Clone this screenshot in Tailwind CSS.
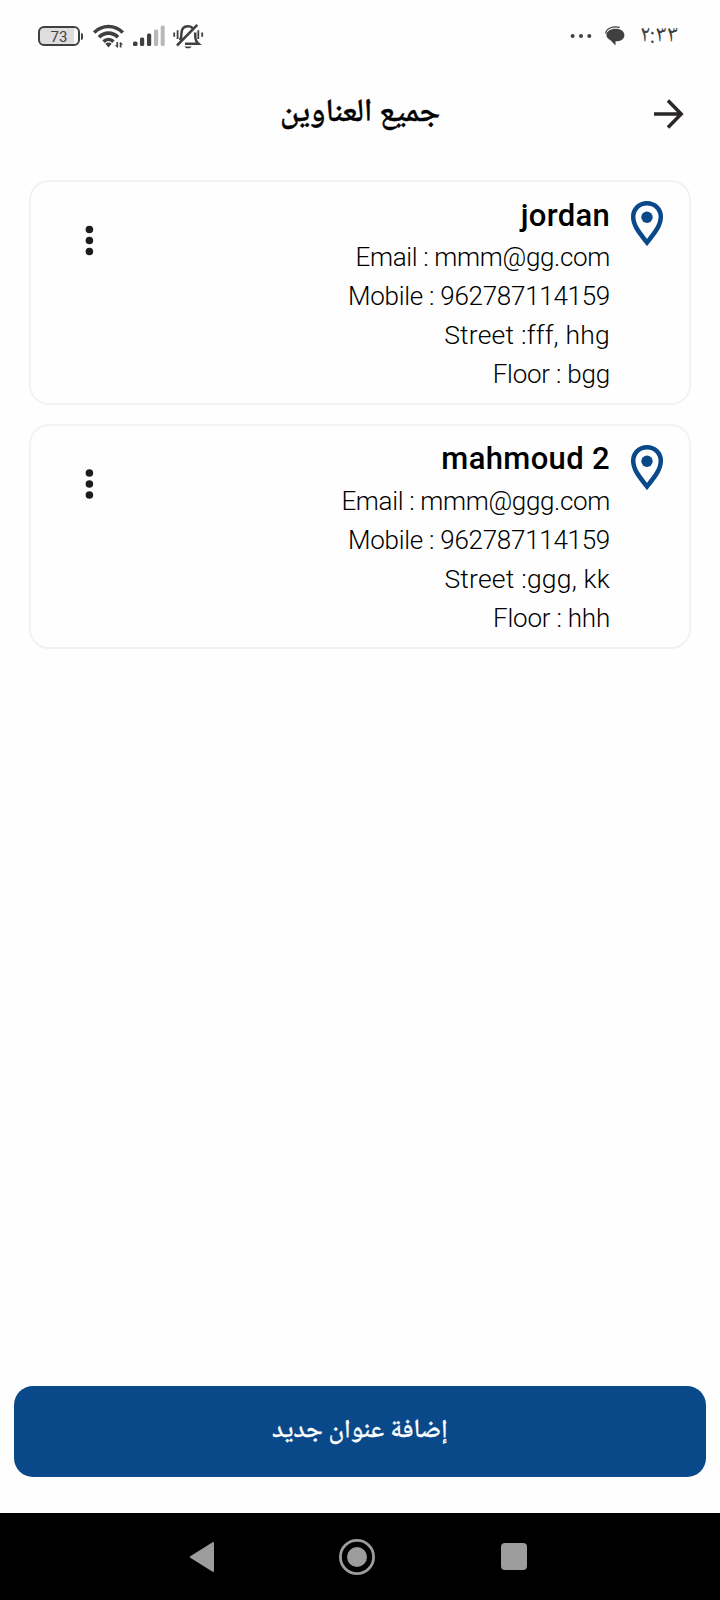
<!DOCTYPE html>
<html lang="ar">
<head>
<meta charset="utf-8">
<meta name="viewport" content="width=device-width, initial-scale=1">
<title>جميع العناوين</title>
<script src="https://cdn.jsdelivr.net/npm/@tailwindcss/browser@4"></script>
</head>
<body class="bg-white">
<div class="flex h-[1600px] w-[720px] flex-col overflow-hidden bg-[#fefefe] font-['Roboto','DejaVu_Sans',sans-serif] text-black">

  <!-- Status bar -->
  <div class="flex h-[72px] shrink-0 items-center justify-between pr-[42px] pl-[38px] text-[#404040]">
    <div class="flex items-center">
      <div class="flex items-center">
        <div class="flex h-[20px] w-[42px] items-center justify-center rounded-[6px] border-2 border-current bg-linear-to-r from-[#dedede] from-90% to-white to-90% pt-[2px] text-[15px] leading-none">73</div>
        <div class="ml-[1px] h-[7px] w-[2px] rounded-r bg-current"></div>
      </div>
      <svg class="ml-[10px] h-[24px] w-[31px]" viewBox="0 0 31 24" fill="none" stroke="currentColor" stroke-width="3.600">
        <path d="M1.200 8.600C9 .5 22 .5 29.800 8.600M6 13.200c5.400-5.400 13.600-5.400 19 0M10.500 17.600c3-2.900 7-2.900 10 0"/>
        <path d="M12.400 19.800c1.800-1.600 4.400-1.600 6.200 0L15.500 23.400z" fill="currentColor" stroke="none"/>
        <path d="M24.300 18v4.600M27.600 23.600V19" stroke-width="1.700"/><path d="M21.800 21.300h3.200v2.800zM30.200 20.600h-3.300v-2.800z" fill="currentColor" stroke="none"/>
      </svg>
      <svg class="ml-[9px] h-[22px] w-[32px]" viewBox="0 0 32 22">
        <g fill="currentColor"><rect x="0" y="16.5" width="4.5" height="4.5" rx="1.5"/><rect x="7" y="12.5" width="4.2" height="8.5" rx="1.5"/><rect x="14" y="8.5" width="4.2" height="12.5" rx="1.5"/></g>
        <g fill="#b8b8b8"><rect x="21" y="4.5" width="4.2" height="16.5" rx="1.5"/><rect x="27.7" y=".5" width="4" height="20.5" rx="1.5"/></g>
      </svg>
      <svg class="ml-[8px] h-[26px] w-[31px]" viewBox="0 0 31 26" fill="none" stroke="currentColor" stroke-width="2.5">
        <path d="M7 17.200c1.200-1.800 1.400-3.400 1.400-6.200 0-5 2.600-7.700 6.600-7.700 2 0 3.400.6 4.500 1.700M12 20.700h13.500c-2.600-2.300-3.300-4.300-3.300-8.300V9.500M4 22.500 24.300 1.800"/>
        <path d="M1.200 9.400v4.400M4.600 7.300v8.600M25.300 7.300v8.600M29.200 9.400v4.400" stroke-width="1.800"/>
        <path d="M11.500 23.400h7.200c-1.400 2.600-5.800 2.600-7.200 0z" fill="currentColor" stroke="none"/>
      </svg>
    </div>
    <div class="flex items-center">
      <svg class="h-[6px] w-[22px]" viewBox="0 0 22 6" fill="currentColor"><circle cx="2.6" cy="3" r="2"/><circle cx="11" cy="3" r="2"/><circle cx="19.3" cy="3" r="2"/></svg>
      <svg class="ml-[13px] h-[20px] w-[20px]" viewBox="0 0 20 20" fill="currentColor">
        <path d="M10.700 2.700c5 0 8.700 2.600 8.700 6.500 0 3.900-3.500 6-8.900 6.100v4.300l-5-5.300C3.200 13 1.400 11.500 1.400 9.100 1.400 5.200 5.400 2.700 10.700 2.700z"/>
        <path d="M.7 7.600C1.200 2.500 7 0 14.800 1.300" fill="none" stroke="currentColor" stroke-width="1.200"/>
      </svg>
      <span class="ml-[15px] font-['Noto_Naskh_Arabic_UI','Noto_Naskh_Arabic','DejaVu_Sans'] text-[24.3px] leading-none" dir="ltr">٢:٣٣</span>
    </div>
  </div>

  <!-- Page header -->
  <header class="grid h-[84px] shrink-0 grid-cols-[60px_1fr_60px] items-center">
    <span></span>
    <h1 class="pb-[2px] text-center font-['Noto_Naskh_Arabic_UI','Noto_Naskh_Arabic','DejaVu_Sans'] text-[32.2px] leading-none font-medium [-webkit-text-stroke:0.5px_currentColor]" dir="rtl">جميع العناوين</h1>
    <svg class="-ml-[8px] h-[32px] w-[32px]" viewBox="0 0 32 32" fill="none" stroke="#2b2729" stroke-width="3.500"><path d="M2 16h26M16 2.500 29.200 16 16 29.500"/></svg>
  </header>

  <!-- Saved addresses -->
  <main class="flex flex-1 flex-col gap-[19px] px-[29px] pt-[24px]">
    <section class="flex h-[225px] justify-between rounded-[20px] border-2 border-[#f2f2f2] pr-[25px] pl-[53px]">
      <svg class="mt-[42px] h-[32px] w-[10px]" viewBox="0 0 10 32" fill="#1c1b1d"><circle cx="5.4" cy="5.500" r="3.8"/><circle cx="5.4" cy="16.500" r="3.8"/><circle cx="5.4" cy="27.500" r="3.8"/></svg>
      <div class="flex gap-[20px]">
        <div class="pt-[14px] text-right text-[26px] leading-[39px] font-light tracking-[-0.34px]">
          <h2 class="mb-[3px] text-[31px] leading-[39px] font-medium tracking-[0.3px]">jordan</h2>
          <p>Email : mmm@gg.com</p>
          <p class="tracking-[-0.28px]">Mobile : 962787114159</p>
          <p class="-mt-px mb-px text-[26.5px] tracking-[0.2px]">Street :fff, hhg</p>
          <p class="tracking-[-0.22px]">Floor : bgg</p>
        </div>
        <svg class="mt-[18px] h-[46px] w-[34px]" viewBox="0 0 34 46"><path d="M17 3.200C9.200 3.200 3.200 9.200 3.200 17c0 8.500 6.300 16 13.800 25.500C24.500 33 30.800 25.500 30.800 17 30.800 9.200 24.800 3.200 17 3.200z" fill="none" stroke="#09498a" stroke-width="4.500"/><circle cx="17" cy="17.300" r="5.700" fill="#09498a"/></svg>
      </div>
    </section>
    <section class="flex h-[225px] justify-between rounded-[20px] border-2 border-[#f2f2f2] pr-[25px] pl-[53px]">
      <svg class="mt-[42px] h-[32px] w-[10px]" viewBox="0 0 10 32" fill="#1c1b1d"><circle cx="5.4" cy="5" r="3.8"/><circle cx="5.4" cy="16" r="3.8"/><circle cx="5.4" cy="27" r="3.8"/></svg>
      <div class="flex gap-[20px]">
        <div class="pt-[14px] text-right text-[26px] leading-[39px] font-light tracking-[-0.34px]">
          <h2 class="-mt-px mb-[4px] text-[31px] leading-[39px] font-medium tracking-[0.35px]">mahmoud 2</h2>
          <p>Email : mmm@ggg.com</p>
          <p class="tracking-[-0.28px]">Mobile : 962787114159</p>
          <p class="-mt-px mb-px text-[26.5px] tracking-[0.2px]">Street :ggg, kk</p>
          <p class="tracking-[-0.22px]">Floor : hhh</p>
        </div>
        <svg class="mt-[18px] h-[46px] w-[34px]" viewBox="0 0 34 46"><path d="M17 3.200C9.200 3.200 3.200 9.200 3.200 17c0 8.500 6.300 16 13.800 25.500C24.500 33 30.800 25.500 30.800 17 30.800 9.200 24.800 3.200 17 3.200z" fill="none" stroke="#09498a" stroke-width="4.500"/><circle cx="17" cy="17.300" r="5.700" fill="#09498a"/></svg>
      </div>
    </section>
  </main>

  <!-- Add address -->
  <div class="shrink-0 px-[14px] pb-[36px]">
    <button class="flex h-[91px] w-full items-center justify-center rounded-[19px] bg-[#09498a] pb-[1px] font-['Noto_Naskh_Arabic_UI','Noto_Naskh_Arabic','DejaVu_Sans'] text-[26.2px] leading-none font-medium text-white [-webkit-text-stroke:0.3px_currentColor]" dir="rtl">إضافة عنوان جديد</button>
  </div>

  <!-- System navigation -->
  <nav class="flex h-[87px] shrink-0 items-center bg-black pl-[189px]">
    <svg class="h-[32px] w-[26px]" viewBox="0 0 26 32" fill="#9c9c9c"><path d="M1.300 15.200 23.600 1.200q1.400-.5 1.400 1v27.600q0 1.500-1.400 1L1.300 16.800q-1.300-.8 0-1.600z"/></svg>
    <svg class="ml-[123px] h-[38px] w-[38px]" viewBox="0 0 38 38"><circle cx="19" cy="19" r="16.600" fill="none" stroke="#9c9c9c" stroke-width="2.800"/><circle cx="19" cy="19" r="10" fill="#9c9c9c"/></svg>
    <div class="ml-[125px] h-[27px] w-[26px] rounded-[4px] bg-[#9c9c9c]"></div>
  </nav>
</div>
</body>
</html>
